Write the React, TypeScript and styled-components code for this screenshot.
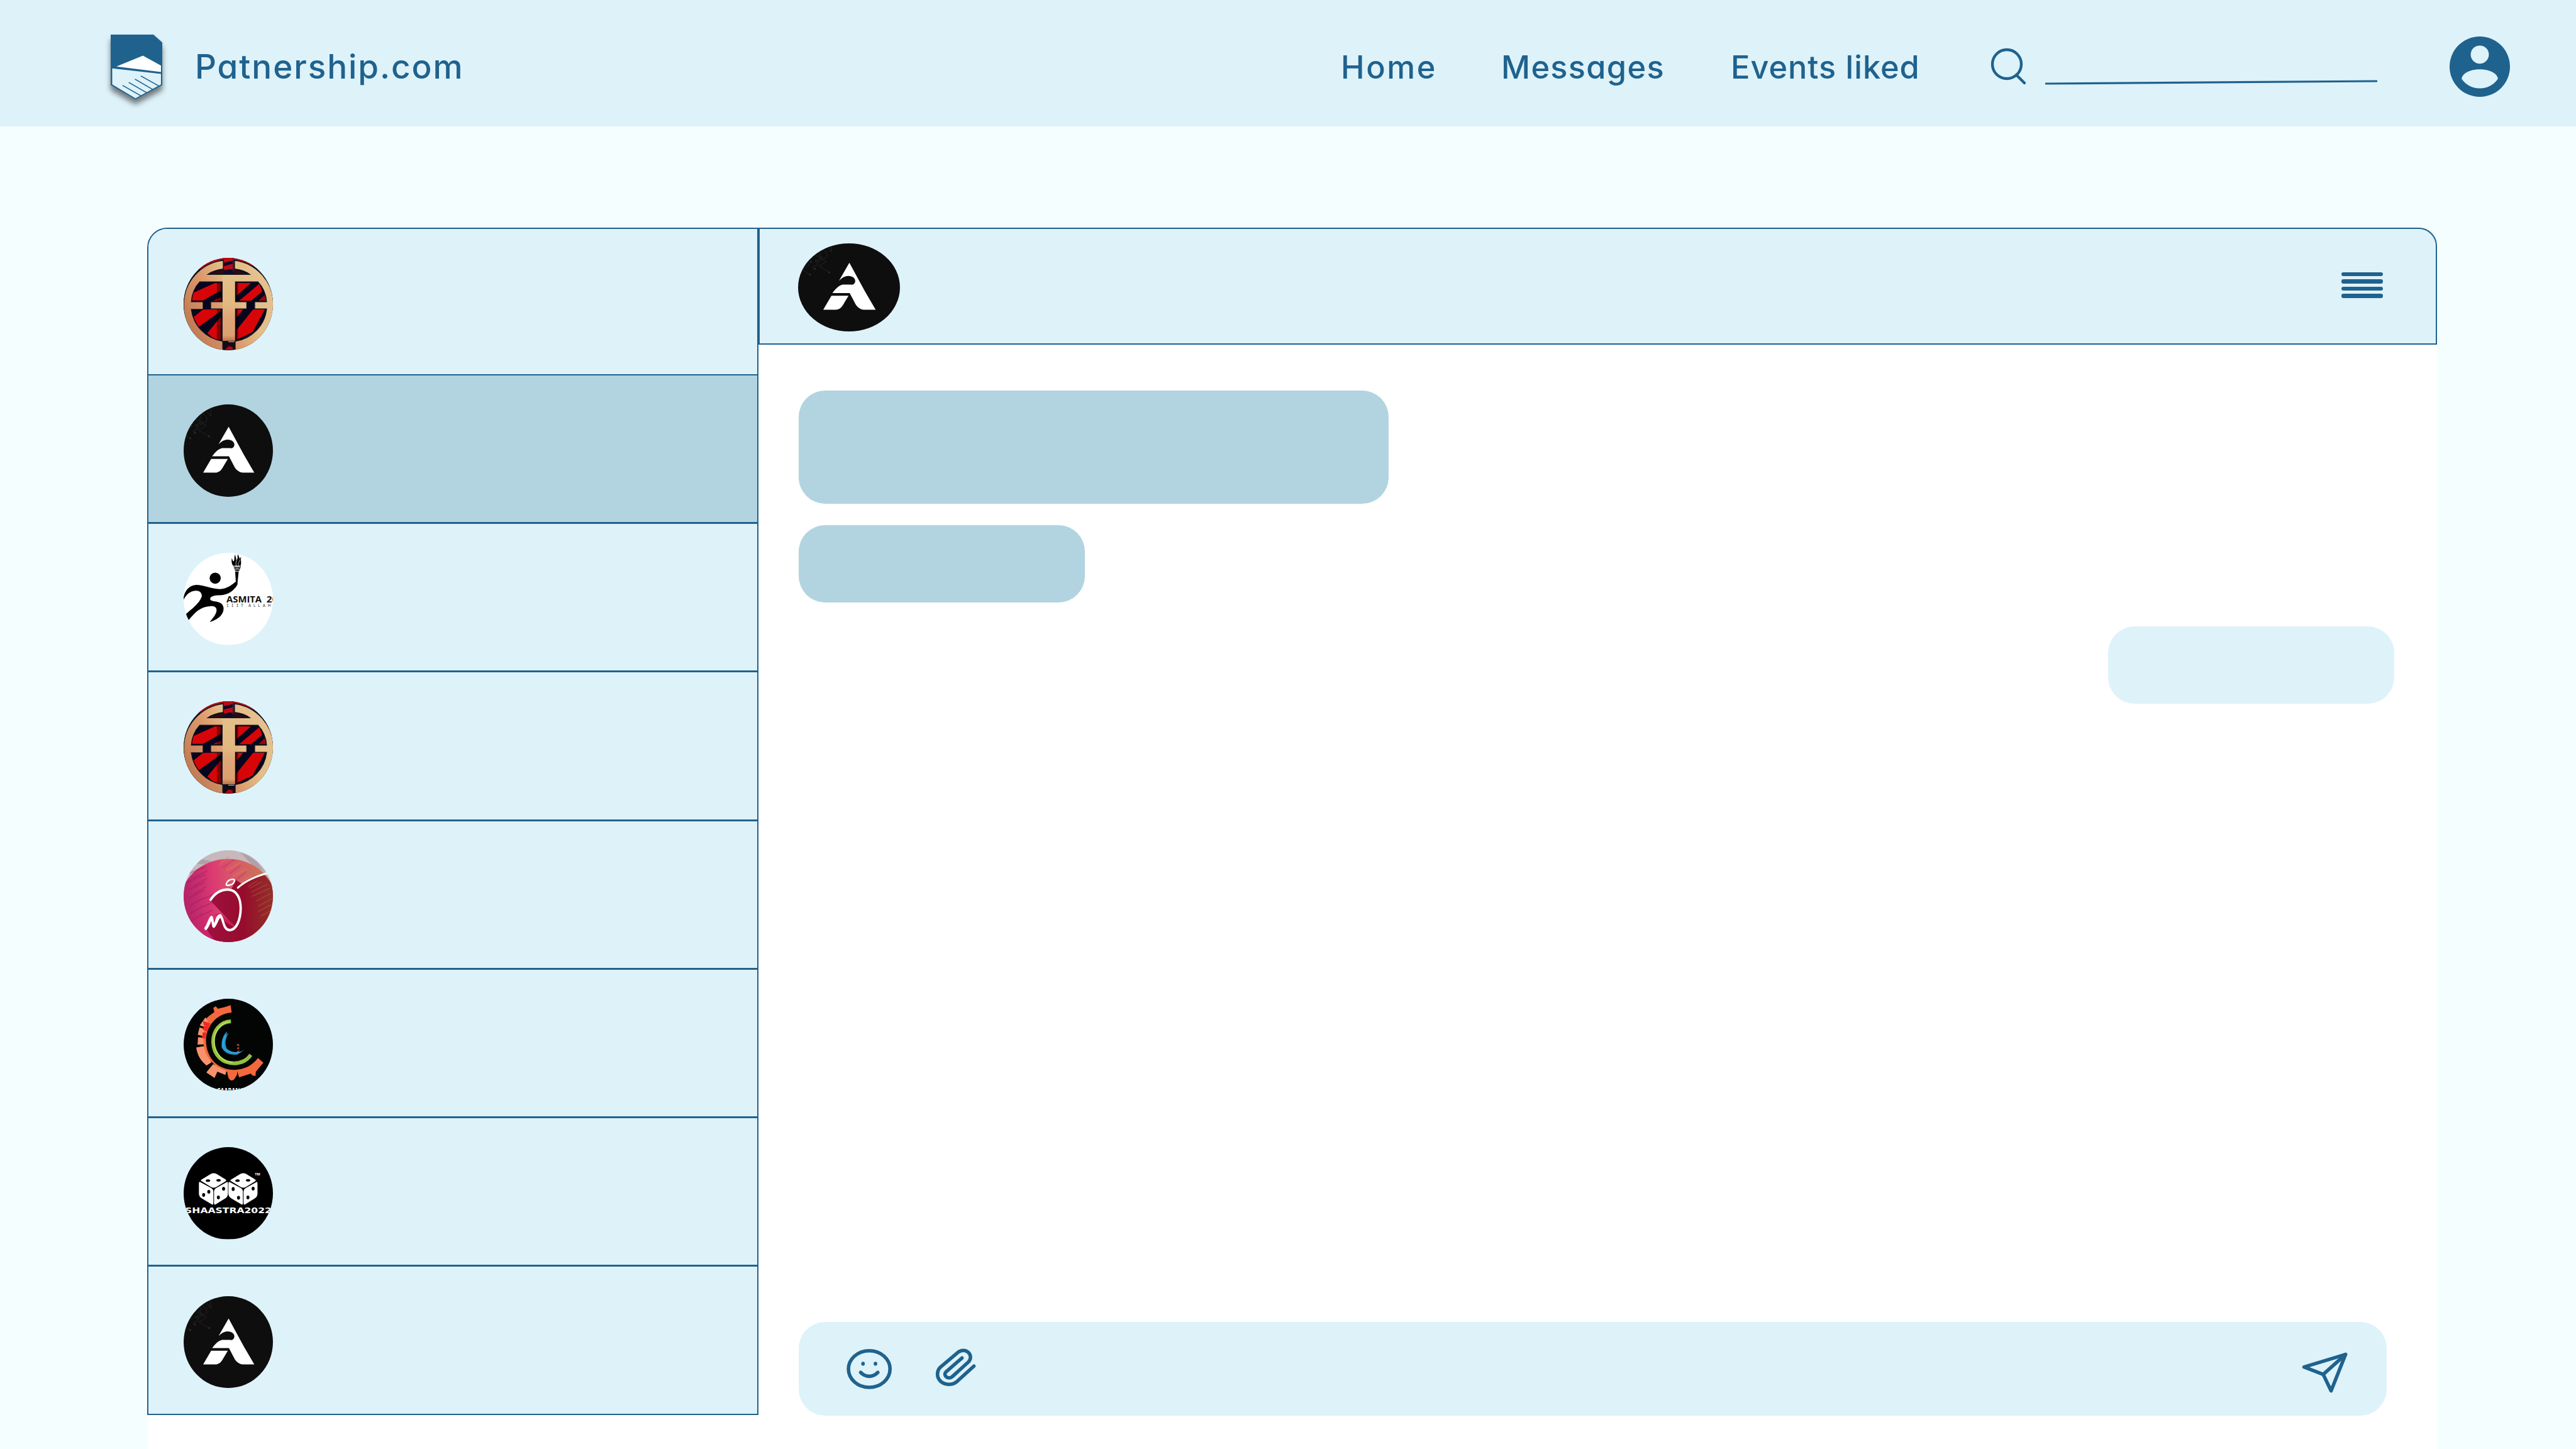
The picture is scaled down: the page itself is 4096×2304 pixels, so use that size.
import React from "react";
import styled, { createGlobalStyle } from "styled-components";

const ink = "#1f628e";
const pale = "#def2f9";
const mid = "#b1d4e0";

const GlobalStyle = createGlobalStyle`
  html, body { margin: 0; padding: 0; background: #f5feff; }
  * { box-sizing: border-box; }
`;

const Page = styled.div`
  display: flex;
  flex-direction: column;
  width: 4096px;
  height: 2304px;
  overflow: hidden;
  background: #f5feff;
  font-family: Inter, "Open Sans", sans-serif;
  color: ${ink};
`;

const TopBar = styled.header`
  display: flex;
  align-items: center;
  height: 201px;
  flex: none;
  padding: 0 105px 0 176px;
  background: ${pale};
`;

const LogoMark = styled.svg`
  width: 82px;
  height: 103px;
  margin-top: 11px;
  overflow: visible;
  filter: drop-shadow(0 8.5px 4.3px rgba(0, 0, 0, 0.5));
`;

const Brand = styled.span`
  width: 1822px;
  margin-left: 52px;
  padding-top: 11px;
  font-size: 53px;
  font-weight: 500;
  letter-spacing: 1.95px;
  font-feature-settings: "cv11";
  white-space: nowrap;
`;

const Nav = styled.nav`
  display: flex;
  padding-top: 11px;
`;

const NavLink = styled.a<{ $width: number; $spacing: number }>`
  width: ${(p) => p.$width}px;
  font-size: 50.5px;
  font-weight: 500;
  letter-spacing: ${(p) => p.$spacing}px;
  font-feature-settings: "cv11";
  white-space: nowrap;
`;

const SearchField = styled.svg`
  width: 620px;
  height: 64px;
  margin-top: 10px;
`;

const ProfileIcon = styled.svg`
  width: 96px;
  height: 96px;
  margin: 10px 0 0 auto;
`;

const Main = styled.main`
  flex: 1;
  display: flex;
  margin: 161px 221px 0 234px;
  background: #fff;
  border-radius: 32px 29px 0 0;
`;

const ContactList = styled.aside`
  display: flex;
  flex-direction: column;
  width: 972px;
  height: 1888px;
  border: 2px solid ${ink};
  border-top-left-radius: 32px;
  background: ${pale};
  overflow: hidden;
`;

const Contact = styled.div<{ $height: number; $line: number; $active?: boolean }>`
  flex: none;
  height: ${(p) => p.$height}px;
  padding: 46.2px 0 0 55.8px;
  border-bottom: ${(p) => p.$line}px solid ${ink};
  background: ${(p) => (p.$active ? mid : pale)};
`;

const Avatar = styled.svg<{ $w: number; $h: number }>`
  display: block;
  width: ${(p) => p.$w}px;
  height: ${(p) => p.$h}px;
  border-radius: 50%;
  overflow: hidden;
`;

const Chat = styled.section`
  flex: 1;
  display: flex;
  flex-direction: column;
`;

const ChatHeader = styled.div`
  display: flex;
  align-items: flex-start;
  justify-content: space-between;
  height: 186px;
  padding: 23px 84px 0 61px;
  background: ${pale};
  border: 2px solid ${ink};
  border-top-right-radius: 29px;
`;

const MenuButton = styled.div`
  display: flex;
  flex-direction: column;
  gap: 5px;
  width: 66px;
  margin-top: 46px;
`;

const MenuBar = styled.span`
  height: 6.4px;
  border-radius: 3.2px;
  background: ${ink};
`;

const Conversation = styled.div`
  flex: 1;
  display: flex;
  flex-direction: column;
  padding: 73px 68px 53px 64px;
`;

const Bubble = styled.div<{ $w: number; $h: number; $gap?: number; $own?: boolean }>`
  flex: none;
  align-self: ${(p) => (p.$own ? "flex-end" : "flex-start")};
  width: ${(p) => p.$w}px;
  height: ${(p) => p.$h}px;
  margin-top: ${(p) => p.$gap ?? 0}px;
  border-radius: 42px;
  background: ${(p) => (p.$own ? pale : mid)};
`;

const Composer = styled.div`
  display: flex;
  align-items: flex-start;
  width: 2525px;
  height: 149px;
  margin-top: auto;
  padding: 43px 63px 0 76px;
  border-radius: 42px;
  background: ${pale};
`;

const ToolIcon = styled.svg<{ $w: number; $h: number; $left?: string; $top?: number }>`
  display: block;
  width: ${(p) => p.$w}px;
  height: ${(p) => p.$h}px;
  margin-left: ${(p) => p.$left ?? "0"};
  margin-top: ${(p) => p.$top ?? 0}px;
  overflow: visible;
  fill: none;
  stroke: ${ink};
  stroke-width: 5.6px;
  stroke-linecap: round;
  stroke-linejoin: round;
  & * { vector-effect: non-scaling-stroke; }
`;

type Size = { w?: number; h?: number };

const AeroAvatar = ({ w = 142, h = 146.4, box = "349.6 139.8 546.6 564.2" }: Size & { box?: string }) => (
  <Avatar $w={w} $h={h} viewBox={box} preserveAspectRatio="none">
    <rect x="300" y="100" width="700" height="700" fill="#0e0e0e" />
    <g fill="none" stroke="#2b2b2b" strokeWidth="3">
      <path d="M516 150V213L494 184" />
      <path d="M455 190L490 217V243L443 272L420 262" />
      <path d="M455 205V225L443 231L464 247L420 270L441 285L407 304L419 313" />
      <path d="M425 232L489 270L443 298L505 335" />
      <path d="M340 318L390 348M350 312L388 289L366 274" />
      <g fill="#2b2b2b">
        <circle cx="505" cy="335" r="5" /><circle cx="419" cy="314" r="5" />
        <circle cx="390" cy="348" r="5" /><circle cx="395" cy="272" r="5" />
      </g>
    </g>
    <g fill="#fff">
      <path d="M625 277L718 448L782 558H712C690 556 673 543 662 525L627 458H524C540 437 562 412 585 408H632C650 411 660 400 660 386C660 367 640 356 618 356C595 357 579 369 563 385Z" />
      <path d="M518 474H620L588 528C577 547 562 558 543 558H469Z" />
    </g>
  </Avatar>
);

const CrestAvatar = ({ id }: { id: string }) => (
  <Avatar $w={142} $h={146.4} viewBox="254 187 532 478" preserveAspectRatio="none">
    <defs>
      <linearGradient id={`${id}-gold`} x1="0" y1="0.75" x2="1" y2="0.2">
        <stop offset="0" stopColor="#bd7650" />
        <stop offset="0.4" stopColor="#dc9b6c" />
        <stop offset="0.62" stopColor="#e4bd86" />
        <stop offset="1" stopColor="#e5c292" />
      </linearGradient>
      <linearGradient id={`${id}-stem`} x1="0" y1="0" x2="0" y2="1">
        <stop offset="0" stopColor="#e3c088" />
        <stop offset="0.45" stopColor="#e2b880" />
        <stop offset="0.65" stopColor="#dfa577" />
        <stop offset="0.92" stopColor="#dba06d" />
        <stop offset="1" stopColor="#c0714a" />
      </linearGradient>
      <clipPath id={`${id}-in`}><ellipse cx="524" cy="432" rx="223" ry="189" /></clipPath>
    </defs>
    <rect x="254" y="187" width="532" height="478" fill="#0b0a20" />
    <path d="M330 187H760L786 330L700 240L560 196H480L340 250Z" fill="#b80a10" />
    <g clipPath={`url(#${id}-in)`}>
      <rect x="254" y="187" width="532" height="478" fill="#07061c" />
      <g fill="#d80508">
        <path d="M300 373L440 318H476V356L370 408H296Z" />
        <path d="M430 410L476 392V410Z" />
        <path d="M305 500L370 455H476V462L340 548Z" />
        <path d="M395 578L476 492V612H440Z" />
        <path d="M569 318H655L569 384Z" />
        <path d="M585 410L705 322L722 362L655 410Z" />
        <path d="M569 455H608L569 497Z" />
        <path d="M569 562L668 455H738L665 572L569 612Z" />
        <path d="M700 410L745 372V410Z" fill="#8d0a14" />
      </g>
      <path d="M398 273L480 246H560L648 273Z" fill="#2a0c10" />
      <g fill="#000" opacity="0.4">
        <rect x="452" y="310" width="32" height="310" />
        <rect x="561" y="310" width="18" height="310" />
      </g>
    </g>
    <g stroke="#111322" strokeWidth="5" fill={`url(#${id}-gold)`}>
      <path fillRule="evenodd" d="M490 200A266 232 0 0 0 254 430A267 236 0 0 0 487 668V620A224 189 0 0 1 300 455H370V415H300C303 374 322 338 350 312H485V415H415V452H485V620H561V452H630V415H561V312H697C725 338 745 374 748 415H677V452H748A224 189 0 0 1 561 620V668A267 236 0 0 0 790 430A266 232 0 0 0 557 200V245C595 249 625 258 648 273H398C425 256 455 249 490 245Z" />
    </g>
    <path d="M486 276H560V618H486Z" fill={`url(#${id}-stem)`} />
    <rect x="493" y="187" width="58" height="62" fill="#bd0a12" />
    <path d="M493 212L551 201V217L493 230ZM493 262L520 246H551V268H493Z" fill="#10092c" />
    <rect x="546" y="187" width="6" height="70" fill="#3a2540" />
    <rect x="489" y="625" width="70" height="45" fill="#120b16" />
    <path d="M499 665L522 645L546 650V665Z" fill="#a80b14" />
    <rect x="520" y="621" width="36" height="3" fill="#f4e6d6" />
  </Avatar>
);

const RunnerAvatar = () => (
  <Avatar $w={142} $h={146.4} viewBox="254 153 532 479" preserveAspectRatio="none">
    <rect x="254" y="153" width="532" height="479" fill="#fff" />
    <ellipse cx="442" cy="285" rx="33" ry="29" />
    <path d="M252 390C262 345 290 322 330 320C372 321 420 340 470 342C510 342 545 318 565 303L576 315C560 345 525 372 470 374C435 374 412 380 412 394C414 404 435 404 455 408C482 413 493 428 492 446C489 482 450 502 409 514C430 490 452 470 450 448C447 432 430 429 410 431C350 434 320 466 284 503L266 473C300 445 345 420 362 380C364 358 345 348 325 350C290 352 268 372 252 400Z" />
    <path d="M561 250H582L574 317L565 308Z" />
    <path d="M552 226Q573 232 595 226M556 234Q573 240 591 234M559 242Q573 248 587 242" fill="none" stroke="#000" strokeWidth="5" />
    <path d="M548 220C538 206 540 196 540 182C548 190 545 196 552 198C560 190 552 176 562 160C560 174 570 178 566 190C580 182 570 174 578 160C580 172 592 180 586 188L597 172C592 190 600 202 594 220Z" />
    <path d="M570 222C555 205 580 190 572 168M583 220C572 212 588 200 590 188" fill="none" stroke="#ddd" strokeWidth="3" />
    <text x="509" y="411" fontFamily="Open Sans" fontWeight="700" fontSize="44" textLength="210" lengthAdjust="spacingAndGlyphs" fill="#111">ASMITA</text>
    <text x="748" y="411" fontFamily="Open Sans" fontWeight="700" fontSize="44" textLength="66" lengthAdjust="spacingAndGlyphs" fill="#111">20</text>
    <text x="509" y="435" fontFamily="DejaVu Sans Mono" fontSize="23" textLength="100" lengthAdjust="spacing" fill="#333">IIIT</text>
    <text x="640" y="435" fontFamily="DejaVu Sans" fontSize="23" textLength="255" lengthAdjust="spacing" fill="#333">ALLAHABAD</text>
  </Avatar>
);

const dashes = Array.from({ length: 26 }, (_, i) => {
  const row = i % 13;
  return i < 13
    ? { x: 275 + ((row * 37) % 70), y: 250 + row * 22, w: 110 - ((row * 29) % 50) }
    : { x: 470 + row * 20, y: 195 + row * 17, w: 50 + ((row * 13) % 30) };
});

const MascotAvatar = () => (
  <Avatar $w={142} $h={146.4} viewBox="254 140 532 512" preserveAspectRatio="none">
    <defs>
      <linearGradient id="disc" x1="0" y1="0.3" x2="1" y2="0.2">
        <stop offset="0" stopColor="#b02068" />
        <stop offset="0.35" stopColor="#dc3a72" />
        <stop offset="0.55" stopColor="#d8586a" />
        <stop offset="0.85" stopColor="#cb7258" />
      </linearGradient>
      <linearGradient id="shade" x1="0" y1="0" x2="1" y2="0">
        <stop offset="0" stopColor="#a01040" />
        <stop offset="0.55" stopColor="#960c2c" />
        <stop offset="1" stopColor="#93302a" />
      </linearGradient>
      <linearGradient id="lower" x1="0" y1="0" x2="0" y2="1">
        <stop offset="0.45" stopColor="#d2206e" stopOpacity="0" />
        <stop offset="1" stopColor="#c81c6e" />
      </linearGradient>
    </defs>
    <rect x="254" y="140" width="532" height="512" fill="#c6b8bc" />
    <path d="M330 215L360 190L420 200L400 220ZM590 150L640 170L690 205L740 262L660 220Z" fill="#a8979d" opacity="0.7" />
    <ellipse cx="520" cy="440" rx="290" ry="252" fill="url(#disc)" />
    <rect x="254" y="330" width="330" height="330" fill="url(#lower)" />
    <g strokeWidth="9" strokeLinecap="round" opacity="0.32">
      {dashes.map((d, i) => (
        <path key={i} d={`M${d.x} ${d.y + 22}L${d.x + d.w} ${d.y - 18}`} stroke={i < 13 ? "#a01862" : i % 2 ? "#e08a50" : "#c42460"} />
      ))}
    </g>
    <path d="M565 305L600 325C640 295 690 275 730 272C760 300 780 330 790 350V660H452L392 582L425 540L470 500L550 556L412 418C450 370 480 355 540 353Z" fill="url(#shade)" />
    <path d="M440 500L550 566L556 556L470 490Z" fill="#c81f55" />
    <g stroke="#b06a3a" strokeWidth="6" strokeLinecap="round" opacity="0.4">
      <path d="M650 350L720 315M660 372L750 330M665 395L765 352M690 420L772 380M700 450L778 410M700 480L778 442M715 505L775 475M640 340L690 312" />
    </g>
    <g fill="none" stroke="#fff" strokeLinecap="round" strokeLinejoin="round">
      <path d="M508 330C512 308 535 298 555 302C562 315 548 334 515 335C508 334 506 332 508 330Z" strokeWidth="8" />
      <path d="M577 348C620 312 690 282 760 266" strokeWidth="11" />
      <path d="M415 415C440 380 475 358 520 359C570 362 594 405 594 465C592 525 570 583 528 584C485 582 492 510 470 502C450 505 450 545 432 563C425 545 430 520 418 514" strokeWidth="14" />
      <path d="M420 514C408 525 400 560 386 574" strokeWidth="18" />
      <path d="M472 504C455 515 448 548 434 562" strokeWidth="17" />
    </g>
  </Avatar>
);

const GearAvatar = () => (
  <Avatar $w={142} $h={146.4} viewBox="254 966 532 512" preserveAspectRatio="none">
    <rect x="254" y="966" width="532" height="512" fill="#030504" />
    <g fill="#f8926c">
      <path d="M384 1070L414 1105L400 1130L350 1115Z" />
      <path d="M349 1125L395 1140L378 1176L338 1166Z" />
      <path d="M340 1180L385 1185L382 1220L337 1221Z" />
      <path d="M329 1237L375 1230L420 1320L390 1338C355 1310 335 1280 329 1237Z" />
      <path d="M430 1330L510 1362L503 1390L455 1372L438 1407L389 1376Z" />
    </g>
    <path d="M534 1002L540 1043C450 1048 387 1120 387 1200C390 1300 460 1362 560 1362C620 1360 665 1335 697 1296L729 1322L684 1372L682 1396L662 1392L655 1382L584 1403L574 1370L572 1390C562 1402 555 1421 541 1421C525 1418 518 1405 514 1375L500 1364C440 1345 370 1290 371 1195C372 1150 388 1110 400 1090L385 1080L405 1062L437 1040L431 1018L445 1008L458 1022L500 1012Z" fill="#f4683d" />
    <g fill="#ef2a24">
      <path d="M368 1088L414 1105L402 1125L374 1112Z" />
      <path d="M375 1115L405 1125L394 1150L370 1140Z" />
      <path d="M368 1152L390 1155L384 1188L362 1186Z" />
    </g>
    <path d="M536 1092C470 1094 428 1145 429 1208C432 1285 490 1325 555 1325C600 1324 635 1305 654 1278" fill="none" stroke="#92c13d" strokeWidth="21" />
    <path d="M528 1094C478 1098 434 1148 435 1205C440 1275 490 1318 545 1321" fill="none" stroke="#bddc5c" strokeWidth="7" />
    <path d="M514 1148C485 1170 478 1205 481 1238C498 1268 530 1282 575 1276L618 1249C585 1268 540 1270 512 1245C495 1215 505 1180 525 1155L505 1172Z" fill="#1f97d2" />
    <path d="M490 1235C486 1205 495 1180 515 1158M500 1245C520 1262 550 1268 590 1264" fill="none" stroke="#7cc4e8" strokeWidth="2" />
    <path d="M573 1218H582V1228H573ZM573 1237H582V1246H573ZM573 1255H582V1264H573Z" fill="#cc4936" />
    <path d="M584 1218V1264" stroke="#8a4a3c" strokeWidth="2" />
    <text x="455" y="1494" fontFamily="Open Sans" fontWeight="700" fontSize="42" textLength="158" lengthAdjust="spacingAndGlyphs" fill="#fff">SAARANG</text>
  </Avatar>
);

const DiceAvatar = () => (
  <Avatar $w={142} $h={146.4} viewBox="254 144 532 435" preserveAspectRatio="none">
    <rect x="254" y="144" width="532" height="435" fill="#000" />
    {[0, 176].map((dx) => (
      <g key={dx} transform={`translate(${dx} 0)`} fill="#fff">
        <path d="M363 296L415 271Q433 263 451 271L503 296Q512 301 503 306L451 331Q433 340 415 331L363 306Q350 301 363 296Z" />
        <path d="M352 309L418 337Q431 343 431 355V408Q431 420 420 414L362 386Q345 378 345 364V318Q345 306 352 309Z" />
        <path d="M512 309L448 337Q435 343 435 355V408Q435 420 446 414L502 386Q518 378 518 364V318Q518 306 512 309Z" />
        <ellipse cx="399" cy="302" rx="13" ry="6" fill="#000" />
        <ellipse cx="462" cy="301" rx="13" ry="6" fill="#000" />
      </g>
    ))}
    <g>
      <ellipse cx="373" cy="370" rx="9" ry="9" /><ellipse cx="404" cy="355" rx="9" ry="9" />
      <ellipse cx="461" cy="382" rx="9" ry="9" /><ellipse cx="492" cy="341" rx="9" ry="9" />
      <ellipse cx="549" cy="342" rx="9" ry="9" /><ellipse cx="581" cy="383" rx="9" ry="9" />
      <ellipse cx="637" cy="382" rx="9" ry="9" /><ellipse cx="668" cy="340" rx="9" ry="9" />
    </g>
    <text x="677" y="279" fontFamily="Liberation Sans" fontWeight="700" fontSize="17" textLength="33" lengthAdjust="spacingAndGlyphs" fill="#fff">TM</text>
    <text x="262" y="456" fontFamily="DejaVu Sans" fontWeight="700" fontSize="35" textLength="516" lengthAdjust="spacingAndGlyphs" fill="#fff">SHAASTRA2022</text>
  </Avatar>
);

const contacts = [
  { height: 233, line: 2, avatar: <CrestAvatar id="crest-a" /> },
  { height: 236, line: 3, avatar: <AeroAvatar />, active: true },
  { height: 236.3, line: 3, avatar: <RunnerAvatar /> },
  { height: 236.3, line: 3, avatar: <CrestAvatar id="crest-b" /> },
  { height: 236.3, line: 3, avatar: <MascotAvatar /> },
  { height: 236.3, line: 3, avatar: <GearAvatar /> },
  { height: 236.3, line: 3, avatar: <DiceAvatar /> },
  { height: 233.5, line: 0, avatar: <AeroAvatar /> },
];

export default function App() {
  return (
    <Page>
      <GlobalStyle />
      <TopBar>
        <LogoMark viewBox="78 114 200 386" preserveAspectRatio="none">
          <path d="M78 114H244L278 161V415L174 500L78 415Z" fill={ink} />
          <path d="M203 240L273 299V337L100 304Z" fill="#fff" />
          <path d="M84 315L273 348V411L174 493L84 411Z" fill={pale} />
          <path d="M195 360L266 421M172 379L241 441M148 399L218 461M124 417L196 479" stroke={ink} strokeWidth="5" />
        </LogoMark>
        <Brand>Patnership.com</Brand>
        <Nav>
          <NavLink $width={255} $spacing={2.6}>Home</NavLink>
          <NavLink $width={365} $spacing={1.3}>Messages</NavLink>
          <NavLink $width={411} $spacing={0.95}>Events liked</NavLink>
        </Nav>
        <SearchField viewBox="0 0 620 64" fill="none" stroke={ink}>
          <circle cx="28" cy="28" r="23" strokeWidth="4.4" />
          <path d="M43 45L56 58" strokeWidth="4.4" strokeLinecap="round" />
          <path d="M89 59L617 55" strokeWidth="3.2" />
        </SearchField>
        <ProfileIcon viewBox="2 2 20 20">
          <circle cx="12" cy="12" r="10" fill={ink} />
          <circle cx="12" cy="8" r="3" fill={pale} />
          <path d="M6 16C6.2 14.2 8.8 12.9 12 12.9S17.8 14.2 18 16C16.7 18 14.5 19.2 12 19.2S7.3 18 6 16Z" fill={pale} />
        </ProfileIcon>
      </TopBar>
      <Main>
        <ContactList>
          {contacts.map((c, i) => (
            <Contact key={i} $height={c.height} $line={c.line} $active={c.active}>
              {c.avatar}
            </Contact>
          ))}
        </ContactList>
        <Chat>
          <ChatHeader>
            <AeroAvatar w={162} h={140} box="319 162 608 525" />
            <MenuButton>
              <MenuBar />
              <MenuBar />
              <MenuBar />
              <MenuBar />
            </MenuButton>
          </ChatHeader>
          <Conversation>
            <Bubble $w={938} $h={180} />
            <Bubble $w={455} $h={123} $gap={34} />
            <Bubble $w={455} $h={123} $gap={38} $own />
            <Composer>
              <ToolIcon $w={72} $h={64} viewBox="530 304 233 237" preserveAspectRatio="none">
                <ellipse cx="647" cy="422" rx="107" ry="108" />
                <path d="M603 442C628 472 666 472 691 442" />
                <path d="M615 389V392M679 389V392" />
              </ToolIcon>
              <ToolIcon $w={63} $h={59} $left="70px" viewBox="992 306 206 219" preserveAspectRatio="none">
                <path d="M1190 407L1100 500C1075 521 1040 520 1017 497C995 472 996 436 1016 413L1107 326C1124 311 1145 311 1160 325C1176 341 1176 365 1162 382L1078 469C1068 479 1053 479 1045 469C1037 460 1038 449 1046 440L1128 359" />
              </ToolIcon>
              <ToolIcon $w={71.2} $h={63.2} $left="auto" $top={6} viewBox="378 326 267 237" preserveAspectRatio="none">
                <path d="M388 411L635 336L549 553L502 455Z" />
                <path d="M502 455L635 336" />
              </ToolIcon>
            </Composer>
          </Conversation>
        </Chat>
      </Main>
    </Page>
  );
}
